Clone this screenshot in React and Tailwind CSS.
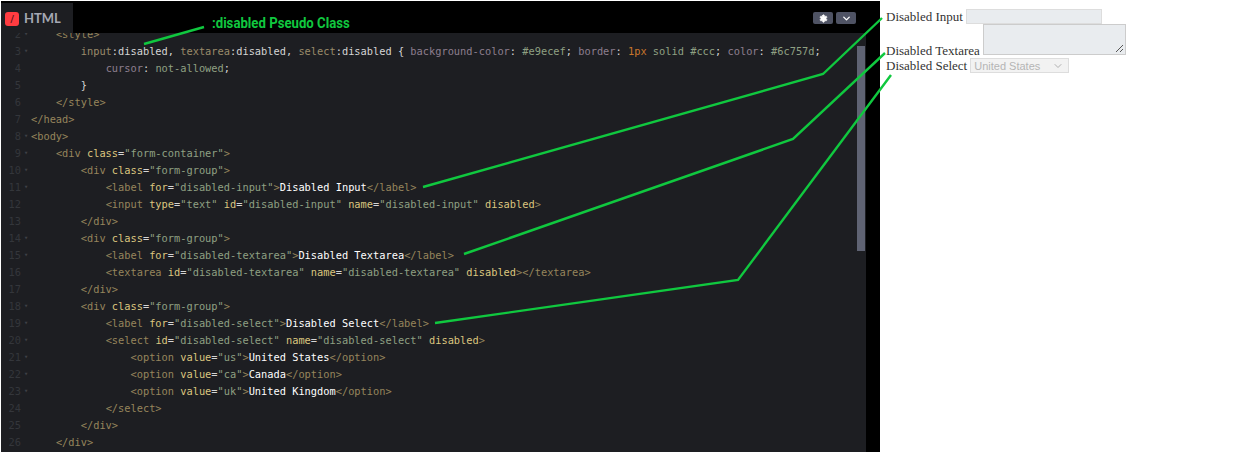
import React from 'react';
import { Settings, ChevronDown } from 'lucide-react';

const tag = 'text-[#96855c]';
const attr = 'text-[#dcc67f]';
const str = 'text-[#8fa083]';
const txt = 'text-white';
const prop = 'text-[#8d7f8f]';
const sel = 'text-[#9a8b6a]';
const num = 'text-[#c9772c]';
const plain = 'text-[#d5d5d5]';

const open = (name) => [tag, `<${name}`];
const close = [tag, '>'];
const kv = (k, v) => [[plain, ' '], [attr, k], [plain, '='], [str, `"${v}"`]];
const divGroup = [open('div'), ...kv('class', 'form-group'), close];
const option = (value, label) => [
  open('option'), ...kv('value', value), close, [txt, label], [tag, '</option>'],
];

const lines = [
  { n: 2, fold: true, indent: 1, parts: [[tag, '<style>']] },
  {
    n: 3, fold: true, indent: 2, parts: [
      [sel, 'input'], [plain, ':disabled, '], [sel, 'textarea'], [plain, ':disabled, '], [sel, 'select'], [plain, ':disabled { '],
      [prop, 'background-color'], [plain, ': '], [str, '#e9ecef'], [plain, '; '],
      [prop, 'border'], [plain, ': '], [num, '1px'], [str, ' solid #ccc'], [plain, '; '],
      [prop, 'color'], [plain, ': '], [str, '#6c757d'], [plain, ';'],
    ],
  },
  { n: 4, indent: 3, parts: [[prop, 'cursor'], [plain, ': '], [str, 'not-allowed'], [plain, ';']] },
  { n: 5, indent: 2, parts: [[plain, '}']] },
  { n: 6, indent: 1, parts: [[tag, '</style>']] },
  { n: 7, indent: 0, parts: [[tag, '</head>']] },
  { n: 8, fold: true, indent: 0, parts: [[tag, '<body>']] },
  { n: 9, fold: true, indent: 1, parts: [open('div'), ...kv('class', 'form-container'), close] },
  { n: 10, fold: true, indent: 2, parts: divGroup },
  { n: 11, fold: true, indent: 3, parts: [open('label'), ...kv('for', 'disabled-input'), close, [txt, 'Disabled Input'], [tag, '</label>']] },
  { n: 12, indent: 3, parts: [open('input'), ...kv('type', 'text'), ...kv('id', 'disabled-input'), ...kv('name', 'disabled-input'), [plain, ' '], [attr, 'disabled'], close] },
  { n: 13, indent: 2, parts: [[tag, '</div>']] },
  { n: 14, fold: true, indent: 2, parts: divGroup },
  { n: 15, fold: true, indent: 3, parts: [open('label'), ...kv('for', 'disabled-textarea'), close, [txt, 'Disabled Textarea'], [tag, '</label>']] },
  { n: 16, indent: 3, parts: [open('textarea'), ...kv('id', 'disabled-textarea'), ...kv('name', 'disabled-textarea'), [plain, ' '], [attr, 'disabled'], close, [tag, '</textarea>']] },
  { n: 17, indent: 2, parts: [[tag, '</div>']] },
  { n: 18, fold: true, indent: 2, parts: divGroup },
  { n: 19, fold: true, indent: 3, parts: [open('label'), ...kv('for', 'disabled-select'), close, [txt, 'Disabled Select'], [tag, '</label>']] },
  { n: 20, fold: true, indent: 3, parts: [open('select'), ...kv('id', 'disabled-select'), ...kv('name', 'disabled-select'), [plain, ' '], [attr, 'disabled'], close] },
  { n: 21, fold: true, indent: 4, parts: option('us', 'United States') },
  { n: 22, fold: true, indent: 4, parts: option('ca', 'Canada') },
  { n: 23, fold: true, indent: 4, parts: option('uk', 'United Kingdom') },
  { n: 24, indent: 3, parts: [[tag, '</select>']] },
  { n: 25, indent: 2, parts: [[tag, '</div>']] },
  { n: 26, indent: 1, parts: [[tag, '</div>']] },
];

const CodeLine = ({ line }) => (
  <div className="flex h-[17px] items-center">
    <span className="w-[20px] shrink-0 text-right text-[#34363b]">{line.n}</span>
    <span className="w-[10px] shrink-0 pl-[3px] text-[7px] text-[#3f4146]">{line.fold ? '▾' : ''}</span>
    <pre className="font-[inherit]">
      {'    '.repeat(line.indent)}
      {line.parts.map(([color, text], i) => (
        <span key={i} className={color}>{text}</span>
      ))}
    </pre>
  </div>
);

const CodePanel = () => (
  <div className="h-[452px] w-[880px] shrink-0 bg-white pl-[1px] pt-[1px]">
    <div className="h-full bg-black">
      <div className="flex h-full w-[865px] flex-col">
        <div className="flex h-[32px] shrink-0 items-start">
          <div className="mt-[2px] flex h-[30px] w-[72px] items-center gap-[5px] bg-[#1d1e22] pl-[4px] pt-[2px]">
            <span className="flex h-[14px] w-[14px] items-center justify-center rounded-[3px] bg-[#ff3c41] text-[10px] leading-none text-[#4a1012]">/</span>
            <span className="font-['Lato',sans-serif] text-[13px] font-bold text-[#a5a8b3]">HTML</span>
          </div>
          <span className="ml-[139px] mt-[13px] origin-left scale-x-[0.85] whitespace-nowrap font-['Roboto',sans-serif] text-[15.5px] font-bold leading-[18px] text-[#10c83f]">:disabled Pseudo Class</span>
          <div className="ml-auto mr-[10px] mt-[11px] flex gap-[3px]">
            <div className="flex h-[12px] w-[20px] items-center justify-center rounded-[2px] bg-[#4f5364]">
              <Settings size={9} className="fill-white text-white" />
            </div>
            <div className="flex h-[12px] w-[20px] items-center justify-center rounded-[2px] bg-[#4f5364]">
              <ChevronDown size={11} strokeWidth={3} className="text-white" />
            </div>
          </div>
        </div>
        <div className="relative flex-1 overflow-hidden bg-[#1d1e22]">
          <div className="-mt-[7px] font-['DejaVu_Sans_Mono',monospace] text-[10.34px] leading-[17px]">
            {lines.map((line) => <CodeLine key={line.n} line={line} />)}
          </div>
          <div className="absolute right-[1px] top-[13px] h-[205px] w-[8px] bg-[#5f6373]" />
        </div>
      </div>
    </div>
  </div>
);

const FormPanel = () => (
  <div className="flex flex-col pl-[6px] pt-[9px] font-['Liberation_Serif',serif] text-[13px] leading-[15px] text-[#333]">
    <div className="flex items-center gap-[3px]">
      <label className="whitespace-nowrap">Disabled Input</label>
      <input type="text" disabled className="h-[15px] w-[136px] border border-[#ddd] bg-[#e9ecef]" />
    </div>
    <div className="flex items-end gap-[3px]">
      <label className="-mb-[3px] whitespace-nowrap">Disabled Textarea</label>
      <div className="relative">
        <textarea disabled className="block h-[31px] w-[143px] resize-none border border-[#ccc] bg-[#e9ecef]" />
        <svg className="absolute bottom-[2px] right-[2px]" width="9" height="9" stroke="#555" strokeWidth="1" fill="none">
          <path d="M1 8 L8 1 M5 8 L8 5" />
        </svg>
      </div>
    </div>
    <div className="mt-[3px] flex items-center gap-[3px]">
      <label className="whitespace-nowrap">Disabled Select</label>
      <div className="relative">
        <select disabled className="block h-[15px] w-[99px] appearance-none border border-[#ddd] bg-[#f2f2f2] pl-[3px] font-['Liberation_Sans',sans-serif] text-[11px] text-[#b5b5b5]">
          <option>United States</option>
        </select>
        <ChevronDown size={12} strokeWidth={1.5} className="absolute right-[5px] top-[2px] text-[#999]" />
      </div>
    </div>
  </div>
);

// green callout lines drawn over the screenshot
const Callouts = () => (
  <svg className="pointer-events-none absolute inset-0" width="1242" height="452" fill="none" stroke="#10c83f" strokeWidth="2.4">
    <polyline points="144,44 204,27" />
    <polyline points="423,187 823,74 882,18" />
    <polyline points="464,254 793,139 885,53" />
    <polyline points="435,323 738,280 891,75" />
  </svg>
);

export default function App() {
  return (
    <div className="relative flex h-[452px] w-[1242px] overflow-hidden bg-white">
      <CodePanel />
      <FormPanel />
      <Callouts />
    </div>
  );
}
